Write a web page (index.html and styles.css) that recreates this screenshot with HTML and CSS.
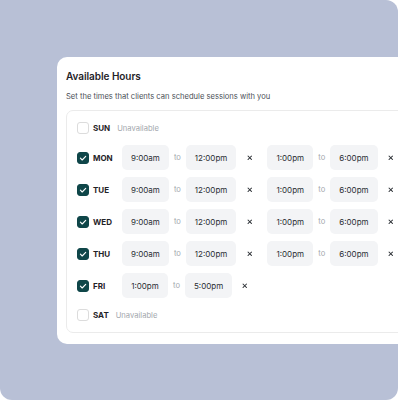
FILE: index.html
```html
<!DOCTYPE html>
<html>
<head>
<meta charset="utf-8">
<link rel="stylesheet" href="styles.css">
</head>
<body>
<div class="frame">
  <div class="card">
    <h1 class="title">Available Hours</h1>
    <p class="subtitle">Set the times that clients can schedule sessions with you</p>
    <div class="days">
      <div class="row off">
        <span class="cb"></span><span class="day">SUN</span><span class="unavail">Unavailable</span>
      </div>
      <div class="row">
        <span class="cb on"><svg viewBox="0 0 12 12"><path d="M3.4 6.2l1.8 1.8 3.5-3.6"/></svg></span><span class="day fixed">MON</span>
        <div class="slot"><span class="time">9:00am</span><span class="to">to</span><span class="time">12:00pm</span><span class="x"><svg viewBox="0 0 6 6"><path d="M0.8 0.8l4.4 4.4M5.2 0.8l-4.4 4.4"/></svg></span></div>
        <div class="slot"><span class="time">1:00pm</span><span class="to">to</span><span class="time">6:00pm</span><span class="x"><svg viewBox="0 0 6 6"><path d="M0.8 0.8l4.4 4.4M5.2 0.8l-4.4 4.4"/></svg></span></div>
      </div>
      <div class="row">
        <span class="cb on"><svg viewBox="0 0 12 12"><path d="M3.4 6.2l1.8 1.8 3.5-3.6"/></svg></span><span class="day fixed">TUE</span>
        <div class="slot"><span class="time">9:00am</span><span class="to">to</span><span class="time">12:00pm</span><span class="x"><svg viewBox="0 0 6 6"><path d="M0.8 0.8l4.4 4.4M5.2 0.8l-4.4 4.4"/></svg></span></div>
        <div class="slot"><span class="time">1:00pm</span><span class="to">to</span><span class="time">6:00pm</span><span class="x"><svg viewBox="0 0 6 6"><path d="M0.8 0.8l4.4 4.4M5.2 0.8l-4.4 4.4"/></svg></span></div>
      </div>
      <div class="row">
        <span class="cb on"><svg viewBox="0 0 12 12"><path d="M3.4 6.2l1.8 1.8 3.5-3.6"/></svg></span><span class="day fixed">WED</span>
        <div class="slot"><span class="time">9:00am</span><span class="to">to</span><span class="time">12:00pm</span><span class="x"><svg viewBox="0 0 6 6"><path d="M0.8 0.8l4.4 4.4M5.2 0.8l-4.4 4.4"/></svg></span></div>
        <div class="slot"><span class="time">1:00pm</span><span class="to">to</span><span class="time">6:00pm</span><span class="x"><svg viewBox="0 0 6 6"><path d="M0.8 0.8l4.4 4.4M5.2 0.8l-4.4 4.4"/></svg></span></div>
      </div>
      <div class="row">
        <span class="cb on"><svg viewBox="0 0 12 12"><path d="M3.4 6.2l1.8 1.8 3.5-3.6"/></svg></span><span class="day fixed">THU</span>
        <div class="slot"><span class="time">9:00am</span><span class="to">to</span><span class="time">12:00pm</span><span class="x"><svg viewBox="0 0 6 6"><path d="M0.8 0.8l4.4 4.4M5.2 0.8l-4.4 4.4"/></svg></span></div>
        <div class="slot"><span class="time">1:00pm</span><span class="to">to</span><span class="time">6:00pm</span><span class="x"><svg viewBox="0 0 6 6"><path d="M0.8 0.8l4.4 4.4M5.2 0.8l-4.4 4.4"/></svg></span></div>
      </div>
      <div class="row">
        <span class="cb on"><svg viewBox="0 0 12 12"><path d="M3.4 6.2l1.8 1.8 3.5-3.6"/></svg></span><span class="day fixed">FRI</span>
        <div class="slot"><span class="time">1:00pm</span><span class="to">to</span><span class="time">5:00pm</span><span class="x"><svg viewBox="0 0 6 6"><path d="M0.8 0.8l4.4 4.4M5.2 0.8l-4.4 4.4"/></svg></span></div>
      </div>
      <div class="row off">
        <span class="cb"></span><span class="day">SAT</span><span class="unavail">Unavailable</span>
      </div>
    </div>
  </div>
</div>
</body>
</html>
```
FILE: styles.css
```css
html, body {
  margin: 0;
  padding: 0;
  background: #ffffff;
}
body {
  font-family: "Inter", "Liberation Sans", sans-serif;
  color: #1f2328;
}
.frame {
  width: 398px;
  height: 400px;
  background: #b8c0d6;
  border-radius: 0 12px 12px 12px;
  box-sizing: border-box;
  padding: 57px 0 0 57px;
  overflow: hidden;
}
.card {
  width: 380px;
  height: 287px;
  background: #ffffff;
  border-radius: 10px;
  box-sizing: border-box;
  padding: 12px 0 0 9px;
}
.title {
  margin: 0;
  font-size: 10px;
  line-height: 14px;
  font-weight: 600;
  color: #1f2328;
  letter-spacing: -0.05px;
}
.subtitle {
  margin: 9px 0 0 0;
  font-size: 7.6px;
  line-height: 10px;
  color: #4b5057;
}
.days {
  margin-top: 8px;
  width: 400px;
  border: 1px solid #ebebeb;
  border-radius: 7px;
  padding: 7px 0 7px 10px;
  display: flex;
  flex-direction: column;
  gap: 7px;
}
.row {
  display: flex;
  align-items: center;
  height: 25px;
}
.row.off {
  height: 20px;
}
.cb {
  width: 12px;
  height: 12px;
  box-sizing: border-box;
  border: 1px solid #dcdcdc;
  border-radius: 3px;
  margin-right: 4px;
  background: #fff;
  display: flex;
  flex-shrink: 0;
}
.cb.on {
  background: #0f4649;
  border-color: #0f4649;
}
.cb svg {
  width: 12px;
  height: 12px;
  margin: -1px;
  fill: none;
  stroke: #ffffff;
  stroke-width: 1.1;
  stroke-linecap: round;
  stroke-linejoin: round;
}
.day {
  font-size: 8px;
  font-weight: 700;
  color: #1f2328;
}
.day.fixed {
  width: 29px;
}
.unavail {
  margin-left: 7px;
  font-size: 7.6px;
  color: #a3a7ad;
}
.slot {
  display: flex;
  align-items: center;
  gap: 5px;
  margin-right: 12px;
}
.time {
  height: 25px;
  min-width: 46px;
  box-sizing: border-box;
  padding: 0 9px;
  background: #f3f4f6;
  border-radius: 5px;
  display: flex;
  align-items: center;
  justify-content: center;
  font-size: 8px;
  color: #2a2e33;
}
.to {
  font-size: 7.6px;
  color: #a3a7ad;
  width: 7px;
  text-align: center;
}
.x {
  width: 12px;
  margin-left: 2px;
  display: flex;
  justify-content: center;
}
.x svg {
  width: 5.5px;
  height: 5.5px;
  fill: none;
  stroke: #2a2e33;
  stroke-width: 1.1;
}
```
